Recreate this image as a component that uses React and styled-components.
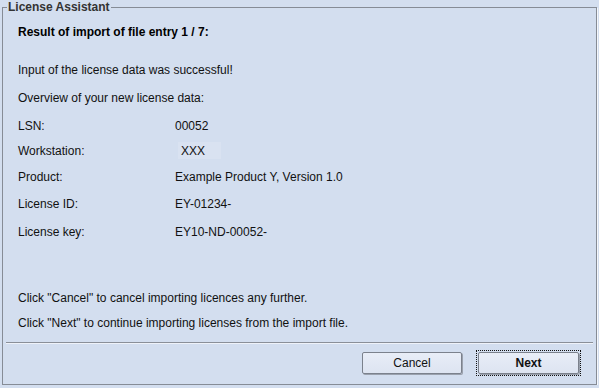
import React from "react"
import styled, { createGlobalStyle } from "styled-components"

const Global = createGlobalStyle`
  html, body {
    margin: 0;
    padding: 0;
    background: #d3deef;
  }
  body {
    font-family: "Liberation Sans", Arial, sans-serif;
    font-size: 12px;
    color: #111;
  }
`

const Frame = styled.div`
  position: relative;
  box-sizing: border-box;
  margin: 7px 2px 0;
  height: 378px;
  border: 1px solid #868c96;
  box-shadow: 1px 1px 0 #f4f7fc;
  display: flex;
  flex-direction: column;
`

const Legend = styled.div`
  position: absolute;
  top: -8px;
  left: 4px;
  padding: 0 1px;
  background: #d3deef;
  font-weight: bold;
  font-size: 12px;
  line-height: 14px;
  color: #333;
`

const Body = styled.div`
  flex: 1;
  display: flex;
  flex-direction: column;
  padding: 17px 15px 0;
`

const Heading = styled.div`
  font-weight: bold;
  line-height: 14px;
  color: #000;
`

const Line = styled.div`
  line-height: 14px;
  margin-top: ${(p) => p.$gap || 0}px;
`

const Grid = styled.div`
  display: grid;
  grid-template-columns: 157px 1fr;
  margin-top: 14px;
`

const Label = styled.div`
  line-height: 14px;
  height: ${(p) => p.$h}px;
`

const Value = styled.div`
  line-height: 14px;
  height: ${(p) => p.$h}px;
`

const Field = styled.span`
  display: inline-block;
  margin: -2px 0 0 3px;
  padding: 2px 3px 1px;
  width: 37px;
  background: #d9e2f1;
`

const Separator = styled.div`
  margin: 12px 3px 0;
  border-top: 1px solid #8a8f98;
  border-bottom: 1px solid #eef2f9;
`

const Buttons = styled.div`
  display: flex;
  justify-content: flex-end;
  align-items: center;
  gap: 14px;
  padding: 6px 15px 0 0;
`

const Focus = styled.div`
  padding: 1px;
  border: 1px dotted #111;
`

const Button = styled.button`
  box-sizing: border-box;
  width: ${(p) => p.$w}px;
  height: 22px;
  border: 1px solid #7b818c;
  border-radius: 2px;
  background: linear-gradient(#e8edf7, #dde4f1);
  box-shadow: 1px 1px 0 #9aa1ad;
  font-family: "Liberation Sans", Arial, sans-serif;
  font-size: 12px;
  font-weight: ${(p) => (p.$primary ? "bold" : "normal")};
  color: #111;
  padding: 0;
`

const rows = [
  ["LSN:", "00052", 25],
  ["Workstation:", null, 26],
  ["Product:", "Example Product Y, Version 1.0", 27],
  ["License ID:", "EY-01234-", 28],
  ["License key:", "EY10-ND-00052-", 14],
]

export default function App() {
  return (
    <>
      <Global />
      <Frame>
        <Legend>License Assistant</Legend>
        <Body>
          <Heading>Result of import of file entry 1 / 7:</Heading>
          <Line $gap={24}>Input of the license data was successful!</Line>
          <Line $gap={14}>Overview of your new license data:</Line>
          <Grid>
            {rows.map(([label, value, h]) => (
              <React.Fragment key={label}>
                <Label $h={h}>{label}</Label>
                <Value $h={h}>{value === null ? <Field>XXX</Field> : value}</Value>
              </React.Fragment>
            ))}
          </Grid>
          <Line $gap={52}>Click "Cancel" to cancel importing licences any further.</Line>
          <Line $gap={11}>Click "Next" to continue importing licenses from the import file.</Line>
        </Body>
        <Separator />
        <Buttons>
          <Button $w={100}>Cancel</Button>
          <Focus>
            <Button $w={101} $primary>Next</Button>
          </Focus>
        </Buttons>
        <div style={{ height: 10 }} />
      </Frame>
    </>
  )
}
